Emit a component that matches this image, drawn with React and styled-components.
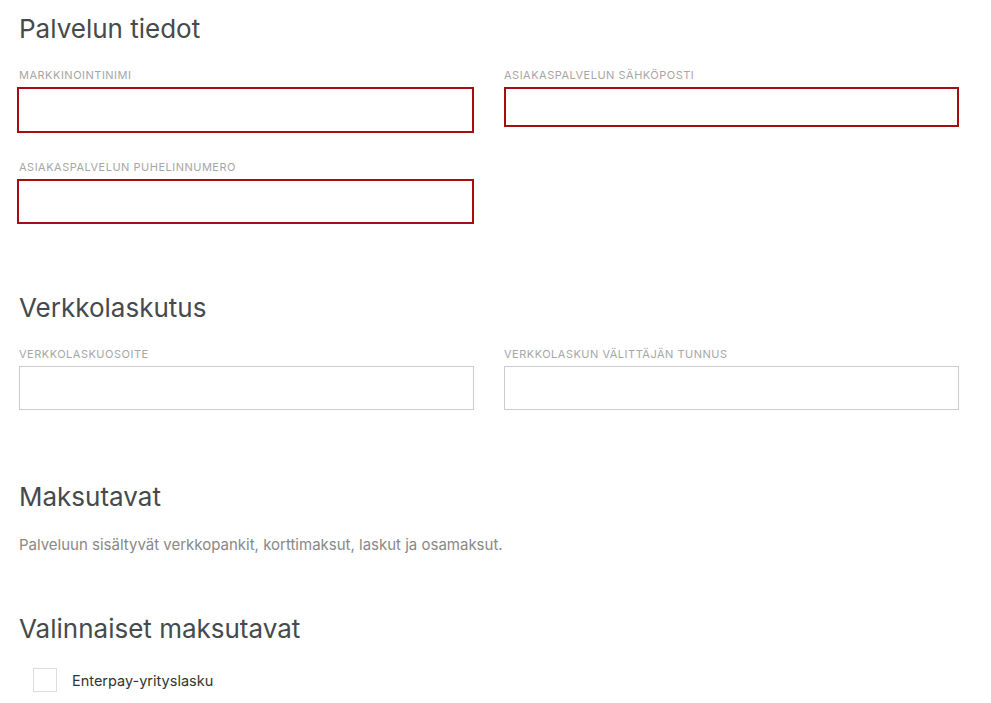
import React from 'react';
import styled, { createGlobalStyle } from 'styled-components';

const GlobalStyle = createGlobalStyle`
  body {
    margin: 0;
    background: #fff;
    font-family: Inter, "Liberation Sans", sans-serif;
    color: #444;
  }
`;

const Page = styled.div`
  padding: 12px 32px 0 19px;
  width: 940px;
`;

const Section = styled.section`
  margin-bottom: ${props => props.spacing || 0}px;
`;

const Heading = styled.h2`
  margin: 0 0 ${props => props.gap || 23}px;
  font-size: 26px;
  line-height: 34px;
  font-weight: 400;
  color: #454a4d;
`;

const FieldGrid = styled.div`
  display: grid;
  grid-template-columns: 455px 455px;
  column-gap: 30px;
  row-gap: 28px;
`;

const Field = styled.label`
  display: flex;
  flex-direction: column;
  gap: 6px;
`;

const FieldLabel = styled.span`
  font-size: 11px;
  line-height: 12px;
  letter-spacing: 0.5px;
  color: #a6a6a6;
  text-transform: uppercase;
`;

const Input = styled.input`
  box-sizing: border-box;
  height: ${props => props.height || 44}px;
  border: ${props => props.invalid ? '2px solid #a50d12' : '1px solid #ccc'};
  background: #fff;
  outline: none;
  font: inherit;
  padding: 0 12px;
`;

const Text = styled.p`
  margin: 0;
  font-size: 15px;
  line-height: 20px;
  color: #888;
`;

const CheckRow = styled.label`
  display: flex;
  align-items: center;
  gap: 15px;
  padding-left: 14px;
  font-size: 14.5px;
  color: #333;
`;

const Box = styled.span`
  box-sizing: border-box;
  width: 24px;
  height: 24px;
  border: 1px solid #ddd;
  background: #fff;
`;

export default function App() {
  return (
    <>
      <GlobalStyle />
      <Page>
        <Section spacing={67}>
          <Heading>Palvelun tiedot</Heading>
          <FieldGrid>
            <Field>
              <FieldLabel>Markkinointinimi</FieldLabel>
              <Input invalid height={46} style={{ marginLeft: -2 }} />
            </Field>
            <Field>
              <FieldLabel>Asiakaspalvelun sähköposti</FieldLabel>
              <Input invalid height={40} />
            </Field>
            <Field>
              <FieldLabel>Asiakaspalvelun puhelinnumero</FieldLabel>
              <Input invalid height={45} style={{ marginLeft: -2 }} />
            </Field>
          </FieldGrid>
        </Section>
        <Section spacing={70}>
          <Heading>Verkkolaskutus</Heading>
          <FieldGrid>
            <Field>
              <FieldLabel>Verkkolaskuosoite</FieldLabel>
              <Input />
            </Field>
            <Field>
              <FieldLabel>Verkkolaskun välittäjän tunnus</FieldLabel>
              <Input />
            </Field>
          </FieldGrid>
        </Section>
        <Section spacing={57}>
          <Heading gap={21}>Maksutavat</Heading>
          <Text>Palveluun sisältyvät verkkopankit, korttimaksut, laskut ja osamaksut.</Text>
        </Section>
        <Section>
          <Heading gap={22}>Valinnaiset maksutavat</Heading>
          <CheckRow>
            <Box />
            Enterpay-yrityslasku
          </CheckRow>
        </Section>
      </Page>
    </>
  );
}
